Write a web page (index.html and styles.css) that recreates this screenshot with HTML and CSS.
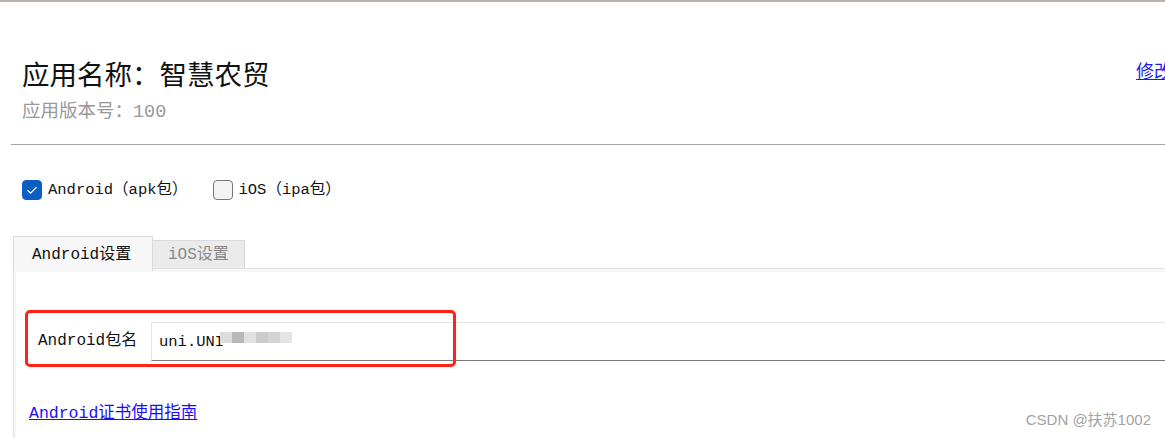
FILE: index.html
```html
<!DOCTYPE html>
<html lang="zh-CN">
<head>
<meta charset="utf-8">
<title>应用设置</title>
<link rel="stylesheet" href="styles.css">
</head>
<body>
<div class="page">
  <div class="head">
    <div class="info">
      <div class="title">应用名称：智慧农贸</div>
      <div class="version">应用版本号：100</div>
    </div>
    <a class="edit" href="#">修改</a>
  </div>
  <div class="divider"></div>

  <div class="platforms">
    <label class="check">
      <span class="box on"><svg viewBox="0 0 20 20" width="20" height="20"><path d="M5.5 10.2 L8.6 13.2 L14.5 7.2" fill="none" stroke="#fff" stroke-width="1.3"/></svg></span>
      <span class="check-text">Android（apk包）</span>
    </label>
    <label class="check">
      <span class="box"></span>
      <span class="check-text">iOS（ipa包）</span>
    </label>
  </div>

  <div class="tabs">
    <div class="tab active">Android设置</div>
    <div class="tab">iOS设置</div>
  </div>
  <div class="panel">
    <div class="panel-inner">
      <div class="form-row">
        <div class="field-label">Android包名</div>
        <div class="field-input">uni.UNI<span class="mosaic"><i class="m1"></i><i class="m2"></i><i class="m3"></i><i class="m4"></i><i class="m5"></i><i class="m6"></i></span></div>
        <div class="annot"></div>
      </div>
      <a class="guide" href="#">Android证书使用指南</a>
    </div>
  </div>
  <div class="watermark">CSDN @扶苏1002</div>
</div>
</body>
</html>
```

FILE: styles.css
```css
html, body {
  margin: 0;
  padding: 0;
  background: #fff;
  overflow: hidden;
}
body {
  font-family: "Liberation Mono", "Noto Sans CJK SC", monospace;
  color: #111;
}
.page {
  position: relative;
  width: 1165px;
  height: 438px;
  border-top: 2px solid #b9b2ac;
  box-sizing: border-box;
  overflow: hidden;
}
.head {
  display: flex;
  justify-content: space-between;
  align-items: flex-start;
  padding: 52px 0 0 22px;
  margin-right: -7px;
}
.title {
  font-family: "Noto Sans CJK SC", sans-serif;
  font-size: 27.5px;
  line-height: 38px;
  color: #111;
}
.version {
  font-size: 18.5px;
  line-height: 26px;
  color: #999;
  margin-top: 8px;
}
.edit {
  font-family: "Noto Sans CJK SC", sans-serif;
  font-size: 18px;
  line-height: 26px;
  color: #1a1aff;
  text-decoration: underline;
  margin-top: 3px;
  white-space: nowrap;
}
.divider {
  margin: 18px 0 0 11px;
  border-top: 1px solid #a3a3a3;
}
.platforms {
  display: flex;
  gap: 25px;
  padding: 35px 0 0 22px;
}
.check {
  display: flex;
  align-items: center;
  gap: 6px;
  font-size: 15.5px;
  line-height: 20px;
}
.box {
  width: 20px;
  height: 20px;
  box-sizing: border-box;
  border-radius: 4px;
  border: 1px solid #777;
  background: #f3f3f3;
  display: block;
}
.box.on {
  background: #0b5fc3;
  border-color: #0b5fc3;
}
.box svg {
  display: block;
  margin: -1px;
}
.tabs {
  display: flex;
  align-items: flex-end;
  margin: 36px 0 0 13px;
  position: relative;
  z-index: 1;
}
.tab {
  font-size: 16px;
  box-sizing: border-box;
  border: 1px solid #dadada;
  border-bottom: none;
}
.tab.active {
  width: 140px;
  height: 35px;
  line-height: 31px;
  padding: 3px 0 0 18px;
  background: #f7f7f7;
  color: #111;
  margin-bottom: -3px;
}
.tab:not(.active) {
  width: 92px;
  height: 28px;
  line-height: 28px;
  padding-left: 15px;
  background: #ebebeb;
  color: #888;
  border-left: none;
}
.panel {
  margin-left: 13px;
  border-top: 1px solid #e0e0e0;
  border-left: 1px solid #e2e2e2;
  background: #f7f7f7;
  padding: 3px 0 0 2px;
  height: 200px;
}
.panel-inner {
  background: #fff;
  height: 100%;
  padding: 50px 0 0 0;
  box-sizing: border-box;
}
.form-row {
  position: relative;
  display: flex;
  align-items: stretch;
  padding-left: 22px;
}
.field-label {
  width: 113px;
  font-size: 16px;
  line-height: 39px;
}
.field-input {
  flex: 1;
  height: 39px;
  box-sizing: border-box;
  border: 1px solid #e6e6e6;
  border-bottom: 1px solid #7a7a7a;
  border-right: none;
  padding-left: 7px;
  font-size: 15.5px;
  line-height: 39px;
  margin-right: -10px;
}
.mosaic {
  display: inline-grid;
  grid-template-columns: repeat(6, 12px);
  grid-template-rows: 11px 6px;
  vertical-align: middle;
  margin-left: -4px;
  margin-top: -2px;
}
.mosaic i { display: block; }
.m1 { background: #dcdcdd; }
.m2 { background: #b6b8bc; }
.m3 { background: #e1e1e1; }
.m4 { background: #cbcbcb; }
.m5 { background: #d2d3d6; }
.m6 { background: #e4e4e4; }
.annot {
  position: absolute;
  left: 9px;
  top: -12px;
  width: 431px;
  height: 57px;
  box-sizing: border-box;
  border: 3px solid #ff2317;
  border-radius: 5px;
  pointer-events: none;
}
.guide {
  display: inline-block;
  margin: 43px 0 0 13px;
  font-size: 16.5px;
  line-height: 20px;
  color: #1a0dff;
  text-decoration: underline;
}
.watermark {
  position: absolute;
  right: 14px;
  bottom: 9px;
  font-family: "Liberation Sans", "Noto Sans CJK SC", sans-serif;
  font-size: 15px;
  color: #a3a3a3;
}
```
